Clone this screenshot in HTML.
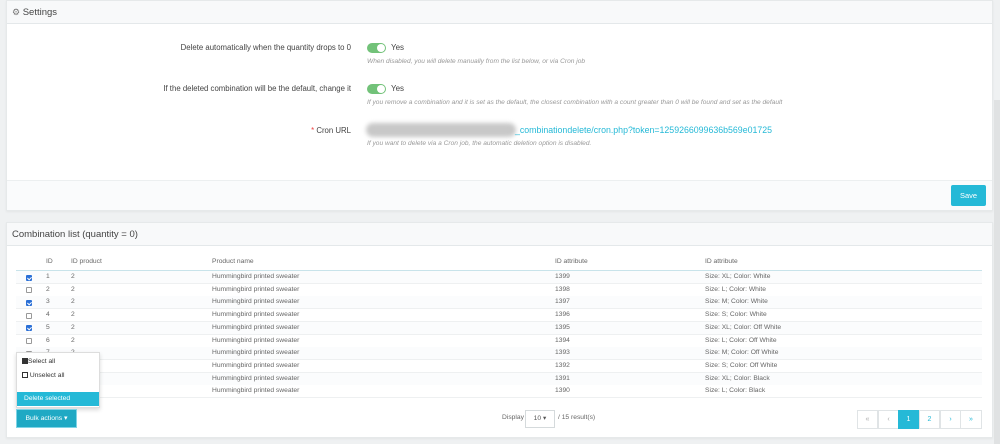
<!DOCTYPE html><html><head><style>
*{box-sizing:border-box;margin:0;padding:0}
body{width:1000px;height:444px;background:#eff1f2;font-family:"Liberation Sans",sans-serif;position:relative;overflow:hidden;color:#555}
.a{position:absolute;white-space:nowrap}
.panel{position:absolute;left:6px;width:987px;background:#fff;border:1px solid #e6e9ea;box-shadow:0 1px 2px rgba(0,0,0,.05)}
.hd{position:absolute;left:0;right:0;top:0;height:23px;background:#f8f9fa;border-bottom:1px solid #e4e8ea;font-size:9.5px;color:#444;padding:6px 0 0 5px}
.lbl{font-size:7.8px;color:#444;text-align:right;width:351px}
.hint{font-size:6.6px;color:#999;font-style:italic}
.tog{position:absolute;width:19px;height:10px;border-radius:5px;background:#72c279}
.tog:after{content:"";position:absolute;right:1px;top:1px;width:8px;height:8px;border-radius:50%;background:#fff}
.t{font-size:6.7px;color:#666}
.cb{position:absolute;left:26px;width:6px;height:6px;border:1px solid #999;border-radius:1px;background:#fff}
.cb.on{background:#2a6fd6;border-color:#2a6fd6}
.cb.on:after{content:"";position:absolute;left:1px;top:0;width:2px;height:3px;border:solid #fff;border-width:0 1px 1px 0;transform:rotate(45deg)}
.row{position:absolute;left:16px;width:966px;height:13px;border-bottom:1px solid #eef0f1}
.pg{position:absolute;top:410px;height:19px;width:21px;border:1px solid #e0e4e6;background:#fff;color:#25b9d7;font-size:7px;text-align:center;line-height:17px}
</style></head><body>
<div class="panel" style="top:0;height:211px">
 <div class="hd"><span style="color:#777;font-size:9px">⚙</span> Settings</div>
 <div style="position:absolute;left:0;right:0;top:179px;bottom:0;background:#fafbfc;border-top:1px solid #eceff0"></div>
 <div class="a" style="left:944px;top:184px;width:35px;height:21px;background:#25b9d7;border-radius:2px;color:#fff;font-size:7.5px;text-align:center;line-height:21px">Save</div>
</div>
<div class="a lbl" style="left:0;top:43px">Delete automatically when the quantity drops to 0</div>
<div class="tog" style="left:367px;top:43px"></div><div class="a" style="left:391px;top:43px;font-size:8px;color:#444">Yes</div>
<div class="a hint" style="left:367px;top:58px">When disabled, you will delete manually from the list below, or via Cron job</div>
<div class="a lbl" style="left:0;top:84px">If the deleted combination will be the default, change it</div>
<div class="tog" style="left:367px;top:84px"></div><div class="a" style="left:391px;top:84px;font-size:8px;color:#444">Yes</div>
<div class="a hint" style="left:367px;top:99px">If you remove a combination and it is set as the default, the closest combination with a count greater than 0 will be found and set as the default</div>
<div class="a lbl" style="left:0;top:126px"><span style="color:#e44">*</span> Cron URL</div>
<div class="a" style="left:366px;top:123px;width:150px;height:14px;border-radius:7px;background:#c8c8c8;filter:blur(2px)"></div>
<div class="a" style="left:515px;top:125px;font-size:8.8px;color:#25b9d7">_combinationdelete/cron.php?token=1259266099636b569e01725</div>
<div class="a hint" style="left:367px;top:140px">If you want to delete via a Cron job, the automatic deletion option is disabled.</div>
<div class="a" style="left:994px;top:100px;width:6px;height:344px;background:#e0e2e3"></div>

<div class="panel" style="top:222px;height:216px">
 <div class="hd">Combination list (quantity = 0)</div>
</div>
<div class="a t" style="left:46px;top:258px">ID</div>
<div class="a t" style="left:71px;top:258px">ID product</div>
<div class="a t" style="left:212px;top:258px">Product name</div>
<div class="a t" style="left:555px;top:258px">ID attribute</div>
<div class="a t" style="left:705px;top:258px">ID attribute</div>
<div class="a" style="left:16px;top:270px;width:966px;height:1px;background:#c8e3ea"></div>
<div id="rows"></div>
<script>
var at=["Size: XL; Color: White","Size: L; Color: White","Size: M; Color: White","Size: S; Color: White","Size: XL; Color: Off White","Size: L; Color: Off White","Size: M; Color: Off White","Size: S; Color: Off White","Size: XL; Color: Black","Size: L; Color: Black"];
var h="";for(var i=0;i<10;i++){var y=271+i*12.7;
h+='<div class="row" style="top:'+y+'px;background:'+(i%2?'#fff':'#fbfcfd')+'"></div>';
h+='<div class="cb'+(i==0||i==2||i==4?' on':'')+'" style="top:'+(y+3.5)+'px"></div>';
h+='<div class="a t" style="left:46px;top:'+(y+2)+'px">'+(i+1)+'</div><div class="a t" style="left:71px;top:'+(y+2)+'px">2</div><div class="a t" style="left:212px;top:'+(y+2)+'px">Hummingbird printed sweater</div><div class="a t" style="left:555px;top:'+(y+2)+'px">'+(1399-i)+'</div><div class="a t" style="left:705px;top:'+(y+2)+'px">'+at[i]+'</div>';}
document.getElementById('rows').innerHTML=h;
</script>
<div class="a" style="left:16px;top:352px;width:84px;height:56px;background:#fff;border:1px solid #ddd;box-shadow:0 2px 4px rgba(0,0,0,.15)"></div>
<div class="a t" style="left:22px;top:358px;color:#333"><span style="display:inline-block;width:6px;height:6px;background:#333;vertical-align:-1px"></span>Select all</div>
<div class="a t" style="left:22px;top:372px;color:#333"><span style="display:inline-block;width:6px;height:6px;border:1px solid #333;vertical-align:-1px"></span> Unselect all</div>
<div class="a" style="left:17px;top:392px;width:82px;height:14px;background:#25b9d7;color:#fff;font-size:6.7px;padding:3px 0 0 7px">Delete selected</div>
<div class="a" style="left:16px;top:409px;width:61px;height:19px;background:#1fa9c4;border:1px solid #7fd4e6;color:#fff;font-size:6.8px;text-align:center;line-height:17px">Bulk actions ▾</div>
<div class="a t" style="left:502px;top:414px">Display</div>
<div class="a" style="left:525px;top:410px;width:30px;height:18px;border:1px solid #d5dadc;font-size:6.7px;color:#555;text-align:center;line-height:16px">10 ▾</div>
<div class="a t" style="left:558px;top:414px">/ 15 result(s)</div>
<div class="pg" style="left:857px;color:#aaa">«</div><div class="pg" style="left:878px;color:#aaa">‹</div>
<div class="pg" style="left:898px;background:#25b9d7;color:#fff;border-color:#25b9d7">1</div>
<div class="pg" style="left:919px">2</div><div class="pg" style="left:940px">›</div><div class="pg" style="left:960px;width:22px">»</div>
</body></html>
